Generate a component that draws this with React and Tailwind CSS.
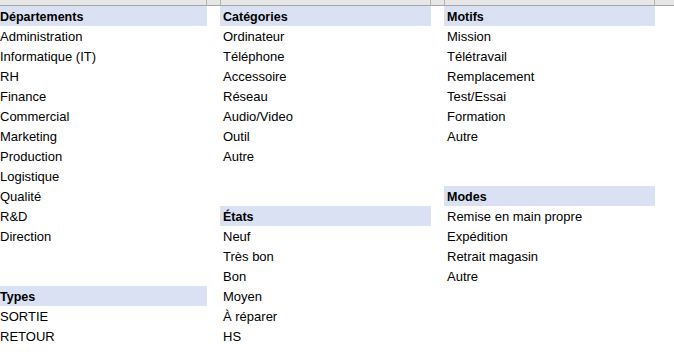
const columns = [
  {
    width: 'w-[207px]',
    pad: 'pl-0',
    rows: [
      { h: 'Départements' },
      'Administration',
      'Informatique (IT)',
      'RH',
      'Finance',
      'Commercial',
      'Marketing',
      'Production',
      'Logistique',
      'Qualité',
      'R&D',
      'Direction',
      '',
      '',
      { h: 'Types' },
      'SORTIE',
      'RETOUR',
    ],
  },
  {
    width: 'w-[211px]',
    pad: 'pl-[3px]',
    rows: [
      { h: 'Catégories' },
      'Ordinateur',
      'Téléphone',
      'Accessoire',
      'Réseau',
      'Audio/Video',
      'Outil',
      'Autre',
      '',
      '',
      { h: 'États' },
      'Neuf',
      'Très bon',
      'Bon',
      'Moyen',
      'À réparer',
      'HS',
    ],
  },
  {
    width: 'w-[211px]',
    pad: 'pl-[3px]',
    rows: [
      { h: 'Motifs' },
      'Mission',
      'Télétravail',
      'Remplacement',
      'Test/Essai',
      'Formation',
      'Autre',
      '',
      '',
      { h: 'Modes' },
      'Remise en main propre',
      'Expédition',
      'Retrait magasin',
      'Autre',
    ],
  },
];

function Column({ col }) {
  return (
    <div className={`${col.width} flex flex-col shrink-0`}>
      {col.rows.map((r, i) =>
        typeof r === 'object' ? (
          <div key={i} className={`h-[20px] leading-[22px] bg-[#d9e1f2] font-bold text-[12.5px] ${col.pad}`}>
            {r.h}
          </div>
        ) : (
          <div key={i} className={`h-[20px] leading-[22px] text-[13px] ${col.pad}`}>
            {r}
          </div>
        )
      )}
    </div>
  );
}

export default function App() {
  return (
    <div
      className="w-[674px] h-[364px] overflow-hidden bg-white text-black"
      style={{ fontFamily: '"Liberation Sans", Arial, sans-serif' }}
    >
      {/* column header strip */}
      <div className="flex h-[6px] bg-[#e6e6e6] border-b border-[#a6a6a6]">
        <div className="w-[207px] border-r border-[#b4b4b4]" />
        <div className="w-[14px] border-r border-[#b4b4b4]" />
        <div className="w-[210px] border-r border-[#b4b4b4]" />
        <div className="w-[14px] border-r border-[#b4b4b4]" />
        <div className="w-[210px] border-r border-[#b4b4b4]" />
        <div className="flex-1" />
      </div>

      <div className="flex">
        <Column col={columns[0]} />
        <div className="w-[13px] shrink-0" />
        <Column col={columns[1]} />
        <div className="w-[13px] shrink-0" />
        <Column col={columns[2]} />
      </div>
    </div>
  );
}
